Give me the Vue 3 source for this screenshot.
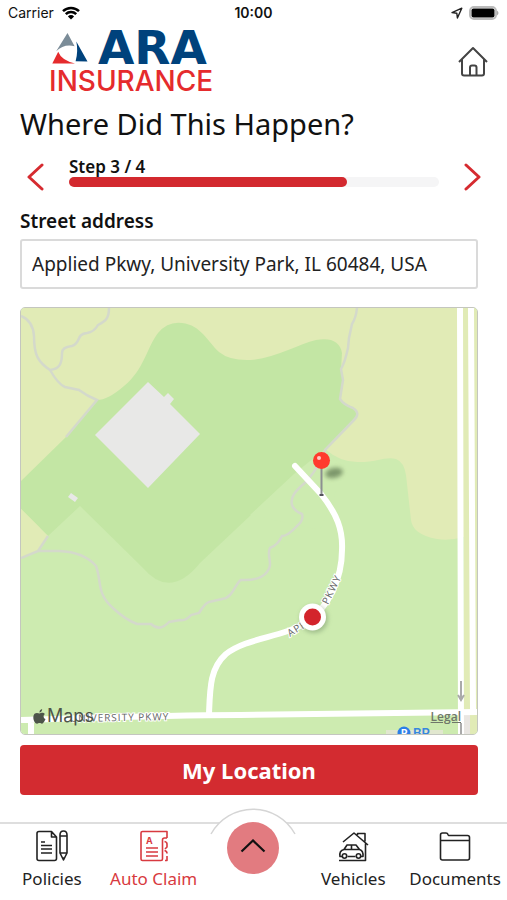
<script setup>
import { ref } from 'vue'

const step = ref(3)
const totalSteps = 4
const address = ref('Applied Pkwy, University Park, IL 60484, USA')
</script>

<template>
  <div class="screen">
    <div class="status">
      <div class="status-side">
        <span>Carrier</span>
        <svg class="wifi" viewBox="0 0 18 14" aria-hidden="true">
          <path d="M1 5.200a11.500 11.500 0 0 1 16 0M3.800 8.100a7.400 7.400 0 0 1 10.400 0" />
          <path class="solid" d="M9 13.600 5.900 10.400a4.400 4.400 0 0 1 6.200 0z" />
        </svg>
      </div>
      <strong class="clock">10:00</strong>
      <div class="status-side end">
        <svg class="locate" viewBox="0 0 12 12" aria-hidden="true">
          <path d="M1 5.600 10.800 1.200 6.400 11 5.800 6.200z" />
        </svg>
        <svg class="battery" viewBox="0 0 30 14" aria-hidden="true">
          <rect class="shell" x="1" y="1" width="26" height="12" rx="4" />
          <path class="tip" d="M28 4.500q3 2.500 0 5z" />
          <rect x="2.500" y="2.500" width="23" height="9" rx="2" />
        </svg>
      </div>
    </div>

    <header class="brand-row">
      <svg class="logo" viewBox="50 30 164 64" role="img" aria-label="ARA Insurance">
        <path fill="#7b8c98" d="M67.500 33 74.600 46.200Q64 43.500 56.200 51.200z" />
        <path fill="#e52b2d" d="M58.200 51.800Q61.500 60.500 75 63.400H52.300z" />
        <path fill="#00427c" d="M76.300 41.500 87.500 61.400 75.600 61.200Q78.400 51 76.300 41.500z" />
        <text class="logo-top" x="98" y="64">ARA</text>
        <text class="logo-bottom" x="49" y="91">INSURANCE</text>
      </svg>
      <button class="icon-button" type="button" aria-label="Home">
        <svg class="home" viewBox="0 0 32 32">
          <path d="M2 16 16 2l14 14M5 13.500v14q0 2 2 2h18q2 0 2-2v-14M13 29v-7.500q0-2 2-2h2.500q2 0 2 2V29" />
        </svg>
      </button>
    </header>

    <main>
      <h1>Where Did This Happen?</h1>

      <div class="stepper">
        <button class="icon-button" type="button" aria-label="Previous step" @click="step = Math.max(1, step - 1)">
          <svg class="chevron" viewBox="0 0 18 30"><path d="M16 3 3 15l13 12" /></svg>
        </button>
        <div class="progress">
          <span class="step">Step {{ step }} / {{ totalSteps }}</span>
          <div class="track"><div class="fill" :style="{ width: (step / totalSteps) * 100 + '%' }"></div></div>
        </div>
        <button class="icon-button" type="button" aria-label="Next step" @click="step = Math.min(totalSteps, step + 1)">
          <svg class="chevron" viewBox="0 0 18 30"><path d="m2 3 13 12L2 27" /></svg>
        </button>
      </div>

      <label for="street">Street address</label>
      <input id="street" v-model="address" type="text" />

      <div class="map">
        <svg class="map-art" viewBox="21 308 456 426" preserveAspectRatio="xMidYMid slice" role="img" aria-label="Map of Applied Pkwy">
          <defs>
            <filter id="soft" x="-50%" y="-50%" width="200%" height="200%"><feGaussianBlur stdDeviation="2" /></filter>
          </defs>
          <rect x="21" y="308" width="456" height="426" fill="#cdebb0" />
          <path fill="#e1ebb6" d="M21 308H477V734H464V537Q449 541 437 539C420 536 412 529 411 520L406 475Q404 462 396 459C387 456 376 462 360 462Q341 463 325 449L300 360 21 540z" />
          <path fill="#c3e6a4" d="M21 481 66 437 97 400Q108 400 124 386C144 370 147 347 158 333Q168 321 182 323C201 325 208 342 219 352Q230 361 251 360C275 358 299 344 316 340Q339 336 342 353L341 370 343 385 340 400Q346 404 354 408 361 413 354 420L325 449 322 458 285 483 200 563Q170 600 143 568L80 506 48 536 21 509z" />
          <path fill="#cdebb0" d="M250 515 294 474 325 449 345 470 320 530z" />
          <path fill="#e1ebb6" d="M21 509 48 536 38 551 21 558z" />
          <path fill="#e8e8e7" d="m148 382 16 15 4-4 6 6-4 5 30 30-52 54-53-53zM71 493l7 5-3 4-7-5z" />

          <g class="trail">
            <path d="M21 316Q33 321 34 336C34 355 38 362 50 370Q58 384 65 387L79 390Q87 396 97 400L66 437M50 370C60 369 62 363 62 353Q62 347 72 346C81 343 76 334 87 333Q94 332 98 325C106 321 109 318 109 308" />
            <path d="M357 308Q356 318 352 324L349 338 348 348Q345 362 341 369L343 380 340 399Q344 405 353 408 361 413 354 420L325 450Q321 464 307 481C295 491 290 497 292 505Q294 511 302 514 304 520 297 526 288 536 282 536 278 545 270 548C266 555 274 564 267 572Q260 581 241 580C236 582 233 598 222 599L209 602Q205 603 199 613L191 615Q186 621 180 620L169 622Q160 632 151 624H137Q126 620 114 609C96 594 102 582 96 566Q84 552 59 551H38L21 558M38 551l10-15" />
          </g>

          <g class="road">
            <path class="freeway" d="M460 308 461 734M471 308 473 711" />
            <path class="freeway" stroke="#e9e6e2" d="M467 715V734" />
            <path d="M295 466 321 494C337 514 343 530 342 550 342 578 329 607 307 622 282 638 248 637 226 654 210 668 210 688 209 714" />
            <path class="freeway" d="M21 720C90 718 160 715 240 715L477 712M31 720V734" />
          </g>
          <path class="one-way" d="M461 681v18m-3-4 3 5 3-5M461 723v11" />
          <text class="road-name" x="70" y="721" transform="rotate(-1 120 718)">UNIVERSITY PKWY</text>
          <text class="road-name" transform="translate(290 637) rotate(-32)">APP</text>
          <text class="road-name" transform="translate(328 605) rotate(-64)">PKWY</text>

          <rect x="386" y="730" width="57" height="5" fill="#e1e7cf" />
          <circle cx="404" cy="733" r="6.500" fill="#2c7fe8" />
          <text class="poi-glyph" x="401" y="737">P</text>
          <text class="poi" x="413" y="738">BP</text>

          <ellipse class="blurred" cx="334" cy="473" rx="9" ry="5" fill="#536a46" opacity=".65" transform="rotate(-12 334 473)" />
          <path d="M321.500 467V494" stroke="#8c8f91" stroke-width="2" />
          <path d="M319.500 495h4" stroke="#55535d" stroke-width="2" />
          <circle cx="321.500" cy="460.500" r="8.500" fill="#ff3b2e" />
          <circle cx="319" cy="458" r="2" fill="#ffc9c4" />
          <circle class="blurred" cx="314" cy="619" r="14" fill="#77936a" opacity=".5" />
          <circle cx="312.500" cy="617" r="13.500" fill="#fff" />
          <circle cx="312.500" cy="617" r="8.500" fill="#d3242c" />
        </svg>
        <div class="attribution">
          <svg class="apple" viewBox="0 0 14 16" aria-hidden="true">
            <path d="M9.800 0C10 1.700 8.700 3.500 7 3.600 6.800 1.900 8.300.300 9.800 0ZM12.900 5.400C10.700 6.700 11 9.800 13.500 10.800 12.900 12.500 11.300 15.600 9.800 15.700 8.700 15.800 8.400 15.100 7.100 15.100S5.400 15.800 4.400 15.800C1.200 15.800-1.500 7.900 2 4.900 4.200 3.300 5.800 4.700 7 4.700S10.600 2.600 12.900 5.400Z" />
          </svg>
          <span>Maps</span>
        </div>
        <a class="legal" href="#legal">Legal</a>
      </div>

      <button class="primary" type="button">My Location</button>
    </main>

    <nav class="tabs">
      <a href="#policies" class="tab">
        <svg viewBox="0 0 32 32">
          <path d="M15.500 1.500H3q-2 0-2 2v25q0 2 2 2h15.500q2 0 2-2V7zV7h5M5 12h4M5 15.500h11M5 19h11M5 23h11M24 5q0-4 3.500-4T31 5v18l-3.500 7L24 23zM24 6h7M24 23h7M26.500 28h2" />
        </svg>
        <span>Policies</span>
      </a>
      <a href="#claim" class="tab active">
        <svg viewBox="0 0 32 32">
          <path d="M29 8V1.500H4.500q-1.500 0-1.500 1.500v26q0 1.500 1.500 1.500H23q1.500 0 1.500-1.500V10q0-2 2-2H29M26.500 11.500q2.500.500 2.500 2.500v3l-2 2M26.500 20.500q2.500.500 2.500 3M29 26v4.500h-2M8 18h12M8 22h12M8 26h12" />
          <text class="claim-letter" x="8" y="14">A</text>
        </svg>
        <span>Auto Claim</span>
      </a>
      <div class="center">
        <svg class="arc" viewBox="0 0 86 28" aria-hidden="true"><path d="M1 26A48 48 0 0 1 85 26" /></svg>
        <button class="more" type="button" aria-label="More">
          <svg viewBox="0 0 26 14"><path d="M1.500 12.500 13 1.500l11.500 11" /></svg>
        </button>
      </div>
      <a href="#vehicles" class="tab">
        <svg viewBox="0 0 32 32">
          <path d="M6 12 17 3 31 15M20.500 5V3.500H28V11.500M28.500 13.500v17H2M5 26.500H3q-1-6 4-7l3-4.500h9l3.500 4.500q4 1 3.500 7h-2M10.500 26.500h8M7 19.500h16M14.500 15v4.500" />
          <circle cx="7.500" cy="26" r="2.200" /><circle cx="21.500" cy="26" r="2.200" />
        </svg>
        <span>Vehicles</span>
      </a>
      <a href="#documents" class="tab">
        <svg viewBox="0 0 32 32">
          <path d="M1.500 8.500V5q0-2 2-2H7q1.500 0 2 1.500l.500 1h19q2 0 2 2V28q0 2-2 2h-25q-2 0-2-2zM1.500 10.500h29" />
        </svg>
        <span>Documents</span>
      </a>
    </nav>
  </div>
</template>

<style>
body {
  margin: 0;
  background: #fff;
}
</style>

<style scoped>
.screen {
  display: flex;
  flex-direction: column;
  min-height: 100vh;
  overflow: hidden;
  color: #111;
  font-family: "Noto Sans", sans-serif;
}
svg {
  display: block;
  flex: none;
}
button {
  border: 0;
  font: inherit;
  cursor: pointer;
}
.status {
  display: flex;
  align-items: center;
  height: 26px;
  padding: 0 8px;
  font: 14px/26px Inter, sans-serif;
}
.status-side {
  display: flex;
  flex: 1;
  align-items: center;
  gap: 8px;
}
.status-side.end {
  justify-content: flex-end;
  gap: 6px;
}
.clock {
  font-weight: 600;
}
.wifi {
  width: 18px;
  height: 14px;
  fill: none;
  stroke: #000;
  stroke-width: 2.5;
}
.wifi .solid {
  fill: #000;
  stroke: none;
}
.locate {
  width: 12px;
  height: 12px;
  fill: none;
  stroke: #222;
  stroke-width: 1.4;
  stroke-linejoin: round;
}
.battery {
  width: 30px;
  height: 14px;
}
.battery .shell {
  fill: #fff;
  stroke: #bbb;
  stroke-width: 2;
}
.battery .tip {
  fill: #aaa;
}
.brand-row {
  display: flex;
  align-items: center;
  justify-content: space-between;
  padding: 4px 18px 6px 50px;
}
.logo {
  width: 164px;
  height: 64px;
  overflow: visible;
}
.logo-top {
  fill: #00427c;
  font: 700 47px "DejaVu Sans", sans-serif;
}
.logo-bottom {
  fill: #e52b2d;
  font: 500 28px Inter, sans-serif;
}
.icon-button {
  display: flex;
  padding: 0;
  background: none;
}
.home {
  width: 32px;
  height: 32px;
  fill: none;
  stroke: #444;
  stroke-width: 2;
  stroke-linejoin: round;
}
main {
  display: flex;
  flex: 1;
  flex-direction: column;
  padding: 0 29px 0 20px;
}
h1 {
  margin: 0;
  font-size: 29px;
  font-weight: 400;
  line-height: 48px;
}
.stepper {
  display: flex;
  align-items: center;
  justify-content: space-between;
  gap: 25px;
  height: 50px;
  margin: 4px -4px 4px 6px;
}
.chevron {
  width: 18px;
  height: 30px;
  fill: none;
  stroke: #d62b30;
  stroke-width: 3;
  stroke-linecap: round;
  stroke-linejoin: round;
}
.progress {
  display: flex;
  flex: 1;
  flex-direction: column;
  padding-bottom: 10px;
}
.step {
  font-size: 17px;
  font-weight: 600;
  line-height: 20px;
}
.track {
  height: 10px;
  border-radius: 5px;
  background: #f5f5f6;
}
.fill {
  height: 10px;
  border-radius: 5px;
  background: #d3292f;
}
label {
  font-size: 19px;
  font-weight: 600;
  line-height: 30px;
}
input {
  box-sizing: border-box;
  width: 100%;
  height: 50px;
  margin: 3px 0 18px;
  padding: 0 10px;
  border: 2px solid #dadada;
  border-radius: 3px;
  background: #fff;
  color: #222;
  font: 19px "Noto Sans", sans-serif;
}
.map {
  position: relative;
  flex: 1;
  box-sizing: border-box;
  overflow: hidden;
  min-height: 428px;
  border: 1px solid #c4c6bf;
  border-radius: 5px;
}
.map-art {
  width: 100%;
  height: 100%;
}
.trail {
  fill: none;
  stroke: #d4d9cb;
  stroke-width: 2.5;
}
.road {
  fill: none;
  stroke: #fff;
  stroke-width: 6;
  stroke-linecap: round;
}
.freeway {
  stroke-linecap: butt;
}
.one-way {
  fill: none;
  stroke: #aaa;
  stroke-width: 2;
}
.road-name {
  fill: #646565;
  stroke: #fff;
  stroke-width: 2;
  paint-order: stroke;
  font: 500 10px "Open Sans", sans-serif;
  letter-spacing: 1px;
}
.poi {
  fill: #3787df;
  font: 600 13px Inter, sans-serif;
}
.poi-glyph {
  fill: #fff;
  font: 700 10px Inter, sans-serif;
}
.blurred {
  filter: url(#soft);
}
.attribution {
  position: absolute;
  bottom: 6px;
  left: 12px;
  display: flex;
  align-items: center;
  gap: 1px;
  color: #4d5549;
  font: 400 18px/24px Inter, sans-serif;
}
.apple {
  width: 13px;
  height: 15px;
  fill: #4d5549;
}
.legal {
  position: absolute;
  right: 16px;
  bottom: 9px;
  color: #6f776a;
  font: 600 12px/16px "Open Sans", sans-serif;
}
.primary {
  height: 50px;
  margin: 10px 0 27px;
  border-radius: 4px;
  background: #d32b30;
  color: #fff;
  font-size: 22px;
  font-weight: 700;
}
.tabs {
  display: grid;
  grid-template-columns: 26fr 25fr 25fr 25fr 26fr;
  height: 77px;
  border-top: 2px solid #dedede;
}
.tab {
  display: flex;
  flex-direction: column;
  align-items: center;
  gap: 4px;
  padding-top: 6px;
  color: #222;
  font-size: 17px;
  line-height: 26px;
  text-decoration: none;
}
.tab svg {
  width: 32px;
  height: 32px;
  fill: none;
  stroke: currentColor;
  stroke-width: 1.6;
  stroke-linejoin: round;
}
.tab .claim-letter {
  fill: currentColor;
  stroke: none;
  font: 700 9px Inter, sans-serif;
}
.active {
  color: #d83a40;
}
.center {
  position: relative;
  display: flex;
  justify-content: center;
}
.arc {
  position: absolute;
  top: -16px;
  width: 86px;
  height: 28px;
  fill: #fff;
  stroke: #d5d5d5;
  stroke-width: 1.5;
}
.more {
  position: absolute;
  top: -2px;
  display: grid;
  place-items: center;
  width: 52px;
  height: 52px;
  padding: 0 0 4px;
  border-radius: 50%;
  background: #e27b80;
}
.more svg {
  width: 26px;
  height: 14px;
  fill: none;
  stroke: #111;
  stroke-width: 2.2;
}
</style>
